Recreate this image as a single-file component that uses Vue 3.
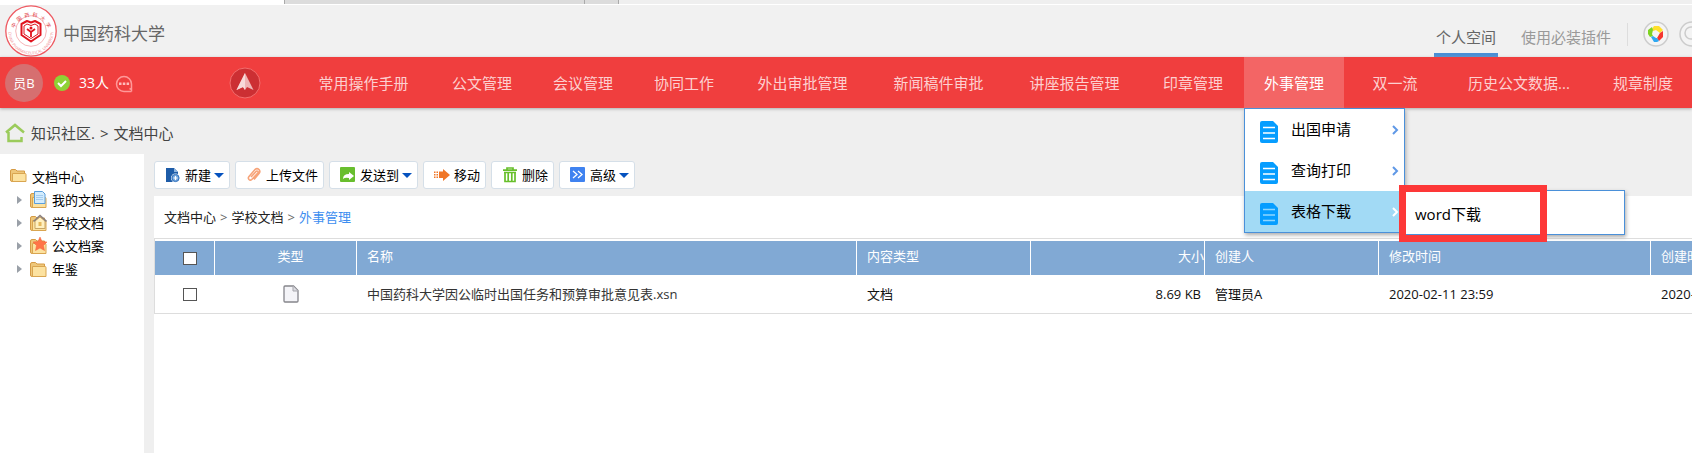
<script setup>
import { ref } from 'vue'

const navItems = [
  { label: '常用操作手册', size: 'wide' },
  { label: '公文管理' },
  { label: '会议管理' },
  { label: '协同工作' },
  { label: '外出审批管理', size: 'wide' },
  { label: '新闻稿件审批', size: 'wide' },
  { label: '讲座报告管理', size: 'wide' },
  { label: '印章管理' },
  { label: '外事管理', active: true },
  { label: '双一流' },
  { label: '历史公文数据...', size: 'widest' },
  { label: '规章制度' },
]
const menu = [{ label: '出国申请' }, { label: '查询打印' }, { label: '表格下载', open: true }]
const tree = [
  { label: '我的文档', icon: 'doc' },
  { label: '学校文档', icon: 'home' },
  { label: '公文档案', icon: 'star' },
  { label: '年鉴', icon: 'plain' },
]
const tools = [
  { label: '新建', icon: 'new', caret: true },
  { label: '上传文件', icon: 'clip' },
  { label: '发送到', icon: 'send', caret: true },
  { label: '移动', icon: 'move' },
  { label: '删除', icon: 'trash' },
  { label: '高级', icon: 'more', caret: true },
]
const all = ref(false)
const picked = ref(false)
</script>

<template>
  <div class="page">
    <div class="strip"><i class="tab-a"></i><i class="tab-b"></i><i class="tab-c"></i></div>

    <header class="top">
      <svg class="logo" viewBox="0 0 52 52" aria-hidden="true">
        <defs>
          <path id="arc-top" d="M8.500 29a17.500 17.500 0 1 1 35 0" />
          <path id="arc-bottom" d="M3.500 27a22.500 22.500 0 0 0 45 0" />
        </defs>
        <circle cx="26" cy="26" r="25.200" fill="#fff" stroke="#ee5a62" stroke-width="1.300" />
        <circle cx="26" cy="26" r="15.300" fill="none" stroke="#f6b5b8" stroke-width="1" />
        <text class="seal-cn"><textPath href="#arc-top" startOffset="50%" text-anchor="middle">中&#160;&#160;国&#160;&#160;药&#160;&#160;科&#160;&#160;大&#160;&#160;学</textPath></text>
        <text class="seal-en"><textPath href="#arc-bottom" startOffset="50%" text-anchor="middle">CHINA PHARMACEUTICAL UNIVERSITY</textPath></text>
        <g fill="none" stroke="#e0141e" stroke-linejoin="round">
          <path d="M26 17.500l-4-1.500-5.500 3v11L26 36.500l9.500-6.500V19L30 16z" stroke-width="2" />
          <path d="M26 20.500l-4-1.500-3 2v8l7 4.500 7-4.500v-8l-3-2z" stroke-width="1" />
          <path d="M22 24l4 3 4-3M26 27v5" stroke-width="1.800" />
        </g>
        <circle cx="26" cy="23" r="1.500" fill="#e0141e" />
      </svg>
      <h1>中国药科大学</h1>
      <nav class="spaces">
        <a href="#" class="space current">个人空间</a>
        <a href="#" class="space">使用必装插件</a>
      </nav>
      <i class="divider"></i>
      <button class="round" aria-label="主题">
        <svg viewBox="0 0 26 26">
          <circle cx="13" cy="13" r="12" fill="#f4f4f4" stroke="#ccc" stroke-width="1.500" />
          <path d="M9 8l2-3h5l4 4-3 3-4-3-3 1z" fill="#ffdf2b" />
          <path d="M9 6l1 3-1 4 1 2-3 1-2-3V9z" fill="#7ed321" />
          <path d="M20 10v6l-4 4-2-3 3-5z" fill="#f5352f" />
          <path d="M8 16l2-1 3 2 1 0 2 3-2 1h-3z" fill="#2fa8f2" />
        </svg>
      </button>
      <button class="round" aria-label="搜索">
        <svg viewBox="0 0 26 26">
          <circle cx="13" cy="13" r="12" fill="#f4f4f4" stroke="#ccc" stroke-width="1.500" />
          <circle cx="12" cy="12" r="6" fill="none" stroke="#ccc" stroke-width="1.500" />
          <path d="M16 16l4 4" stroke="#ccc" stroke-width="2" />
        </svg>
      </button>
    </header>

    <div class="bar">
      <div class="user">
        <span class="avatar">员B</span>
        <svg class="ok" viewBox="0 0 16 16"><circle cx="8" cy="8" r="8" fill="#8fd135" /><path d="M4 8l3 3 5-5" fill="none" stroke="#fff" stroke-width="2" /></svg>
        <span class="online">33人</span>
        <svg class="chat" viewBox="0 0 18 18"><path d="M16.500 16.500H9A7.500 7.500 0 1 1 16.500 9v5.500l-2-1M16.500 13v3.500" fill="none" stroke="#f99" stroke-width="1.500" /><path d="M4 7.500h2.500v2.500H4zM7.800 7.500h2.500v2.500H7.800zM11.600 7.500h2.500v2.500h-2.500z" fill="#fbb" /></svg>
      </div>
      <button class="rocket" aria-label="快捷">
        <svg viewBox="0 0 32 32">
          <circle cx="16" cy="16" r="15" fill="#cc2f33" stroke="#f36d6d" stroke-width="1" />
          <path d="M16 6l8.500 17-6.500-3-2 3-2-3-6.500 3z" fill="#efb4b5" />
          <path d="M16 6v17l-2-3-6.500 3z" fill="#f8dada" />
        </svg>
      </button>
      <nav class="nav">
        <div v-for="n in navItems" :key="n.label" class="nav-item" :class="[n.size, { active: n.active }]">
          <a href="#">{{ n.label }}</a>
          <div v-if="n.active" class="menu">
            <a v-for="m in menu" :key="m.label" href="#" class="menu-row" :class="{ open: m.open }">
              <svg class="sheet" viewBox="0 0 18 22">
                <path d="M2 0h11l5 5v15a2 2 0 0 1-2 2H2a2 2 0 0 1-2-2V2a2 2 0 0 1 2-2z" fill="#069dff" />
                <path class="lines" d="M3 6.500h12M3 12h12M3 17.500h12" stroke-width="1.600" />
              </svg>
              <span>{{ m.label }}</span>
              <svg class="chev" viewBox="0 0 7 10"><path d="M1 1l4 4-4 4" fill="none" stroke="currentColor" stroke-width="2" /></svg>
            </a>
            <div class="submenu"><a href="#">word下载</a><i class="mark"></i></div>
          </div>
        </div>
      </nav>
    </div>

    <div class="crumb">
      <svg viewBox="0 0 20 20"><path d="M1 9.500L10 2l9 7.500M3.500 9v9h13v-4" fill="none" stroke="#9bcb5b" stroke-width="2.500" /></svg>
      <a href="#">知识社区.</a><span>&gt;</span><a href="#">文档中心</a>
    </div>

    <div class="body">
      <aside class="side">
        <a href="#" class="root">
          <svg class="folder" viewBox="0 0 17 17"><path d="M.500 3q0-1.500 1.500-1.500h3.500L7 3h7.500v10.500H2Q.500 13.500.500 12z" fill="#eec77a" stroke="#d59b45" /><path d="M2.500 13.500v-8h12.500q1 0 1 1v7z" fill="#fce2a0" stroke="#d9a550" /></svg>
          文档中心
        </a>
        <a v-for="t in tree" :key="t.label" href="#" class="leaf">
          <svg class="arrow" viewBox="0 0 5 8"><path d="M0 0l5 4-5 4z" fill="#9aa0a8" /></svg>
          <svg class="folder" viewBox="0 0 17 17">
            <path d="M.500 4q0-1.500 1.500-1.500h3.500L7 4h7.500v12.500H2Q.500 16.500.500 15z" fill="#eec77a" stroke="#d59b45" />
            <path d="M2.500 16.500v-10h12.500q1 0 1 1v9z" fill="#fce2a0" stroke="#d9a550" />
            <g v-if="t.icon === 'doc'"><path d="M4.500.500h8l2.500 2.500v9.500H4.500z" fill="#d3ecfd" stroke="#5a9fdc" /><path d="M6 4.500h7M6 6.500h7M6 8.500h7" stroke="#a5cdef" /></g>
            <g v-if="t.icon === 'home'"><path d="M5 7v7.500h10V7l-5-4z" fill="#fff0c0" stroke="#c9a565" /><path d="M3.500 7.500L10 1.500l6.500 6" fill="none" stroke="#8b7f7b" stroke-width="1.600" /><path d="M8.500 8h3v4h-3z" fill="#e6b95c" /></g>
            <path v-if="t.icon === 'star'" d="M10 0l2 4.500 5 .500-3.500 3.500 1 5-4.500-2.500L5.500 13.500l1-5L3 5l5-.500z" fill="#ff7448" stroke="#f0623a" stroke-width=".5" />
          </svg>
          {{ t.label }}
        </a>
      </aside>

      <main class="main">
        <div class="tools">
          <button v-for="b in tools" :key="b.label" class="tool">
            <svg class="ico" viewBox="0 0 16 16">
              <g v-if="b.icon === 'new'"><path d="M1 1h8l4 4v10H1z" fill="#1d5ca8" /><path d="M9 1l4 4H9z" fill="#8db4df" /><circle cx="10.500" cy="11" r="4.500" fill="#fff" /><circle cx="10.500" cy="11" r="3.600" fill="#72a4dc" stroke="#2d6fbc" /><path d="M8.500 11h4M10.500 9v4" stroke="#fff" stroke-width="1.200" /></g>
              <path v-if="b.icon === 'clip'" d="M5 10l5-5.500q1-1 1.800-.200t0 1.700l-6 6.500q-1.500 1.300-2.800 0-1.300-1.500 0-3L9 2.500q2-1.700 4 0 1.700 1.800 0 4L8 12.500" fill="none" stroke="#f7a378" stroke-width="1.600" />
              <g v-if="b.icon === 'send'"><rect x="0" y="0" width="15" height="15" rx="1" fill="#68be2e" /><path d="M3 12q0-5 6-5V5l5 4-5 4v-2q-4-1-6 1z" fill="#fff" /></g>
              <path v-if="b.icon === 'move'" d="M5 4.500h4V2l7 6-7 6v-3H5zM2.500 4.500H4V6H2.500zM2.500 7H4v1.500H2.500zM2.500 9.500H4V11H2.500zM0 4.500h1.500V6H0zM0 7h1.500v1.500H0zM0 9.500h1.500V11H0z" fill="#f07627" />
              <g v-if="b.icon === 'trash'" fill="none" stroke="#67bf2b" stroke-width="1.700"><path d="M1 3.200h14M5 3V1h6v2M2 5.500h12M3 6v8.500h10V6M6.200 6v8M9.800 6v8" /></g>
              <g v-if="b.icon === 'more'"><rect x="0" y="0" width="15" height="15" rx="1" fill="#3f82f0" /><path d="M3 4l4 3.500L3 11M8 4l4 3.500L8 11" fill="none" stroke="#fff" stroke-width="1.300" /></g>
            </svg>
            {{ b.label }}
            <svg v-if="b.caret" class="caret" viewBox="0 0 10 5"><path d="M0 0h10L5 5z" fill="#0552bf" /></svg>
          </button>
        </div>

        <section class="panel">
          <div class="path"><a href="#">文档中心</a><i>&gt;</i><a href="#">学校文档</a><i>&gt;</i><a href="#" class="here">外事管理</a></div>
          <div class="scroll">
            <table>
              <colgroup>
                <col class="c-check" /><col class="c-type" /><col /><col class="c-mid" /><col class="c-mid" /><col class="c-mid" /><col class="c-date" /><col class="c-date" />
              </colgroup>
              <thead>
                <tr>
                  <th class="mid box"><input v-model="all" type="checkbox" aria-label="全选" /></th>
                  <th class="mid">类型</th>
                  <th>名称</th>
                  <th>内容类型</th>
                  <th class="right">大小</th>
                  <th>创建人</th>
                  <th>修改时间</th>
                  <th>创建时间</th>
                </tr>
              </thead>
              <tbody>
                <tr>
                  <td class="mid"><input v-model="picked" type="checkbox" aria-label="选择" /></td>
                  <td class="mid">
                    <svg class="file" viewBox="0 0 16 18"><path d="M1 2q0-1 1-1h8.500L15 5.500V16q0 1-1 1H2q-1 0-1-1z" fill="#f4f4f8" stroke="#85858b" stroke-width="1.300" /><path d="M10 1v5h5" fill="#dcdce2" stroke="#a5a5ab" /></svg>
                  </td>
                  <td class="name">中国药科大学因公临时出国任务和预算审批意见表.xsn</td>
                  <td>文档</td>
                  <td class="right size">8.69 KB</td>
                  <td>管理员A</td>
                  <td>2020-02-11 23:59</td>
                  <td>2020-02-11 23:59</td>
                </tr>
              </tbody>
            </table>
          </div>
        </section>
      </main>
    </div>
  </div>
</template>

<style>
body { margin: 0; }
</style>

<style scoped>
.page {
  min-height: 100vh;
  display: flex;
  flex-direction: column;
  overflow: hidden;
  background: #efefef;
  font-family: "Open Sans", "Noto Sans CJK SC", sans-serif;
  font-size: 13px;
  line-height: 18px;
  color: #111;
}
.page, .page * { box-sizing: border-box; }
a { color: inherit; text-decoration: none; white-space: nowrap; }
button { font: inherit; color: inherit; margin: 0; padding: 0; border: 0; background: none; white-space: nowrap; }
svg { flex: none; display: block; }

.strip { display: flex; height: 5px; border-bottom: 1px solid #fff; }
.tab-a { width: 284px; background: #fff; }
.tab-b { width: 301px; background: #dcdcdc; border: solid #aaa; border-width: 0 1px; }
.tab-c { width: 34px; background: #dcdcdc; border-right: 1px solid #aaa; }

.top { display: flex; height: 52px; padding-left: 5px; background: #f1f1f1; margin-right: -13px; }
.logo { width: 52px; height: 52px; }
.seal-cn { font-size: 5px; fill: #e0343c; }
.seal-en { font-size: 4px; fill: #f08a90; }
h1 { margin: 0; padding-left: 6px; font-size: 17px; font-weight: 400; line-height: 58px; color: #666; }
.spaces { display: flex; margin-left: auto; gap: 21px; }
.space { padding: 0 2px; font-size: 15px; line-height: 64px; height: 52px; color: #999; }
.current { color: #666; border-bottom: 4px solid #4a8fd5; }
.divider { width: 1px; height: 23px; margin: 18px 15px 0 14px; background: #ddd; }
.round { width: 26px; height: 26px; margin: 16px 10px 0 0; }
.round + .round { margin-right: 0; }

.bar { position: relative; z-index: 2; display: flex; align-items: center; height: 51px; background: #f03e3e; color: #fff; box-shadow: 0 1px 3px #aaa; }
.user { display: flex; flex: none; align-items: center; width: 229px; padding-left: 5px; }
.avatar { width: 38px; height: 38px; border-radius: 50%; background: #d66f70; text-align: center; line-height: 38px; }
.ok { width: 16px; height: 16px; margin: 0 9px 0 11px; }
.online { font-size: 14px; }
.chat { width: 18px; height: 18px; margin: 2px 0 0 6px; }
.rocket { flex: none; width: 32px; height: 32px; margin-right: 35px; }
.rocket svg { width: 32px; height: 32px; }
.nav { display: flex; flex: 1; min-width: 0; gap: 1px; font-size: 15px; color: #fdd0d0; }
.nav-item { position: relative; flex: none; width: 100px; height: 51px; text-align: center; line-height: 53px; }
.wide { width: 135px; }
.widest { width: 146px; }
.active { background: #f36565; color: #fff; }

.menu { position: absolute; left: 0; top: 51px; width: 161px; border: 1px solid #4a90d9; background: #fff; box-shadow: 1px 2px 4px #aaa; color: #000; }
.menu-row { display: flex; align-items: center; height: 41px; padding: 0 5px 0 15px; line-height: 41px; }
.menu-row span { flex: 1; padding-left: 13px; text-align: left; }
.sheet { width: 18px; height: 22px; margin-top: 4px; }
.lines { stroke: #fff; }
.chev { width: 7px; height: 10px; color: #5f98e6; }
.open { background: #a2daf5; }
.open .lines { stroke: #8fd6ff; }
.open .chev { color: #fff; }
.submenu { position: absolute; left: 158px; top: 81px; width: 222px; height: 45px; padding-left: 11px; border: 1px solid #4a90d9; background: #fff; box-shadow: 1px 2px 4px #aaa; text-align: left; line-height: 47px; }
.mark { position: absolute; left: -5px; top: -6px; width: 148px; height: 57px; border: 7px solid #fd3838; }

.crumb { display: flex; align-items: center; height: 46px; padding: 4px 0 0 5px; font-size: 15px; color: #444; }
.crumb svg { width: 20px; height: 20px; margin-right: 6px; }
.crumb span { padding: 0 5px; }

.body { display: flex; flex: 1; }
.side { flex: none; width: 144px; padding: 11px 0 0 10px; background: #fff; color: #000; }
.root, .leaf { display: flex; align-items: center; height: 23px; }
.folder { width: 17px; height: 17px; margin-right: 5px; }
.leaf { padding-left: 7px; }
.arrow { width: 5px; height: 8px; margin-right: 8px; }

.main { display: flex; flex: 1; flex-direction: column; min-width: 0; padding: 7px 0 0 10px; }
.tools { display: flex; gap: 5px; color: #000; }
.tool { display: flex; align-items: center; height: 28px; padding: 0 5px 0 10px; border: 1px solid #d5dfe8; border-radius: 3px; background: #fff; }
.ico { width: 16px; height: 16px; margin-right: 4px; }
.caret { width: 10px; height: 5px; margin-left: 3px; }

.panel { flex: 1; margin-top: 7px; background: #fff; }
.path { display: flex; height: 43px; padding-left: 10px; line-height: 42px; border-bottom: 1px solid #ddd; color: #222; }
.path i { padding: 0 4px; font-style: normal; color: #666; }
.path .here { color: #3d8ef0; }
.scroll { overflow: hidden; padding-top: 2px; border-left: 1px solid #ddd; }
table { width: calc(100% + 231px); table-layout: fixed; border-collapse: separate; border-spacing: 0; }
.c-check { width: 60px; }
.c-type { width: 142px; }
.c-mid { width: 174px; }
.c-date { width: 272px; }
th, td { padding: 0 0 0 10px; text-align: left; font-weight: 400; white-space: nowrap; }
th { height: 34px; padding-bottom: 4px; background: #81a9d4; color: #fff; border-right: 1px solid #fff; }
.box { padding-bottom: 0; }
td { height: 39px; border-bottom: 1px solid #ddd; }
.name { color: #333; }
.mid { text-align: center; }
.right { text-align: right; }
.size { padding-right: 4px; }
input { appearance: none; display: block; width: 14px; height: 13px; margin: 0 auto; border: 1px solid #555; background: #fff; }
input:checked { background: #3d8ef0; }
.file { width: 16px; height: 18px; margin: 0 auto; }
</style>
